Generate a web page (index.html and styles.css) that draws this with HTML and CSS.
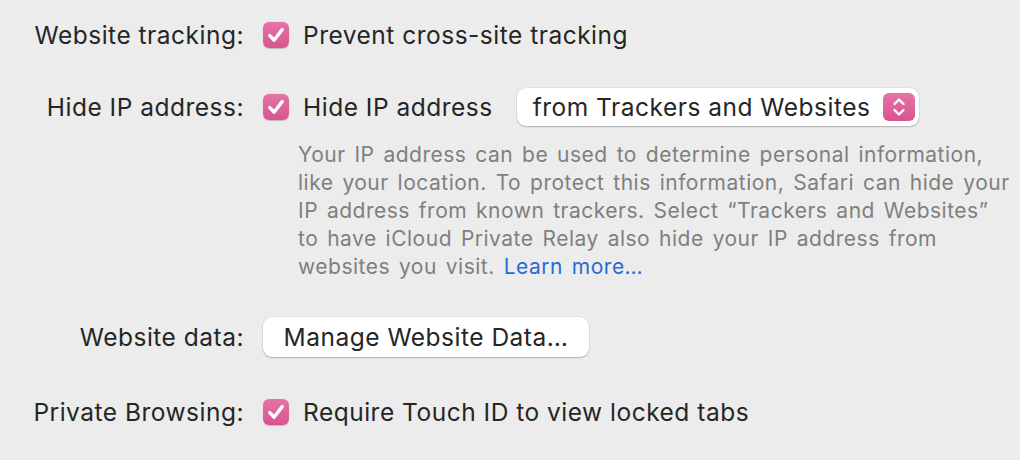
FILE: index.html
```html
<!DOCTYPE html>
<html>
<head>
<meta charset="utf-8">
<link rel="stylesheet" href="styles.css">
</head>
<body>
<div class="pane">
  <div class="row r1">
    <div class="label">Website tracking:</div>
    <div class="content">
      <span class="check"><svg viewBox="0 0 26 26" width="26" height="26"><path d="M6.8 13.6 L11 18.2 L19.2 7.6" fill="none" stroke="#fff" stroke-width="3.4" stroke-linecap="round" stroke-linejoin="round"/></svg></span>
      <span class="text">Prevent cross-site tracking</span>
    </div>
  </div>
  <div class="row r2">
    <div class="label">Hide IP address:</div>
    <div class="content">
      <span class="check"><svg viewBox="0 0 26 26" width="26" height="26"><path d="M6.8 13.6 L11 18.2 L19.2 7.6" fill="none" stroke="#fff" stroke-width="3.4" stroke-linecap="round" stroke-linejoin="round"/></svg></span>
      <span class="text">Hide IP address</span>
      <div class="popup">
        <span class="popup-text">from Trackers and Websites</span>
        <span class="stepper"><svg viewBox="0 0 32 28" width="32" height="28"><path d="M11.5 11 L16 6.5 L20.5 11 M11.5 17 L16 21.5 L20.5 17" fill="none" stroke="#fff" stroke-width="2.3" stroke-linecap="round" stroke-linejoin="round"/></svg></span>
      </div>
    </div>
  </div>
  <p class="desc">Your IP address can be used to determine personal information, like your location. To protect this information, Safari can hide your IP address from known trackers. Select “Trackers and Websites” to have iCloud Private Relay also hide your IP address from websites you visit. <a class="link">Learn more…</a></p>
  <div class="row r3">
    <div class="label">Website data:</div>
    <div class="content">
      <button class="btn">Manage Website Data…</button>
    </div>
  </div>
  <div class="row r4">
    <div class="label">Private Browsing:</div>
    <div class="content">
      <span class="check"><svg viewBox="0 0 26 26" width="26" height="26"><path d="M6.8 13.6 L11 18.2 L19.2 7.6" fill="none" stroke="#fff" stroke-width="3.4" stroke-linecap="round" stroke-linejoin="round"/></svg></span>
      <span class="text">Require Touch ID to view locked tabs</span>
    </div>
  </div>
</div>
</body>
</html>
```
FILE: styles.css
```css
html, body {
  margin: 0;
  padding: 0;
  background: #ececec;
}
body {
  width: 1020px;
  height: 460px;
  overflow: hidden;
  font-family: Inter, "Noto Sans", sans-serif;
  color: #262626;
  font-size: 24.5px;
  letter-spacing: 0.5px;
}
.pane {
  display: flex;
  flex-direction: column;
}
.row {
  display: flex;
  align-items: center;
}
.label {
  width: 244px;
  text-align: right;
  flex: none;
}
.content {
  display: flex;
  align-items: center;
  margin-left: 19px;
}
.r1 { height: 40px; margin-top: 15px; }
.r2 { height: 40px; margin-top: 32px; }
.r3 { height: 40px; margin-top: 36px; }
.r4 { height: 40px; margin-top: 35px; }
.check {
  width: 26px;
  height: 26px;
  border-radius: 6px;
  background: linear-gradient(#e574a8, #d9548f);
  box-shadow: 0 0.5px 1px rgba(0,0,0,0.2);
  display: flex;
  flex: none;
}
.text {
  margin-left: 14px;
}
.popup {
  margin-left: 24px;
  width: 402px;
  height: 38px;
  box-sizing: border-box;
  background: #fff;
  border-radius: 9px;
  box-shadow: 0 0 0 0.5px rgba(0,0,0,0.08), 0 1px 1.5px rgba(0,0,0,0.22);
  display: flex;
  align-items: center;
  justify-content: space-between;
  padding: 0 4px 0 16px;
}
.stepper {
  width: 32px;
  height: 28px;
  border-radius: 6px;
  background: linear-gradient(#e574a8, #d9548f);
  display: flex;
  align-items: center;
  justify-content: center;
}
.desc {
  margin: 14px 0 0 298px;
  width: 712px;
  font-size: 21px;
  letter-spacing: 0.5px;
  word-spacing: 2.5px;
  line-height: 28px;
  color: #7f7f7f;
}
.link {
  color: #2b6ad4;
}
.btn {
  font: inherit;
  letter-spacing: inherit;
  color: #262626;
  width: 326px;
  height: 40px;
  border: none;
  background: #fff;
  border-radius: 9px;
  box-shadow: 0 0 0 0.5px rgba(0,0,0,0.08), 0 1px 1.5px rgba(0,0,0,0.22);
  padding: 0;
}
```
